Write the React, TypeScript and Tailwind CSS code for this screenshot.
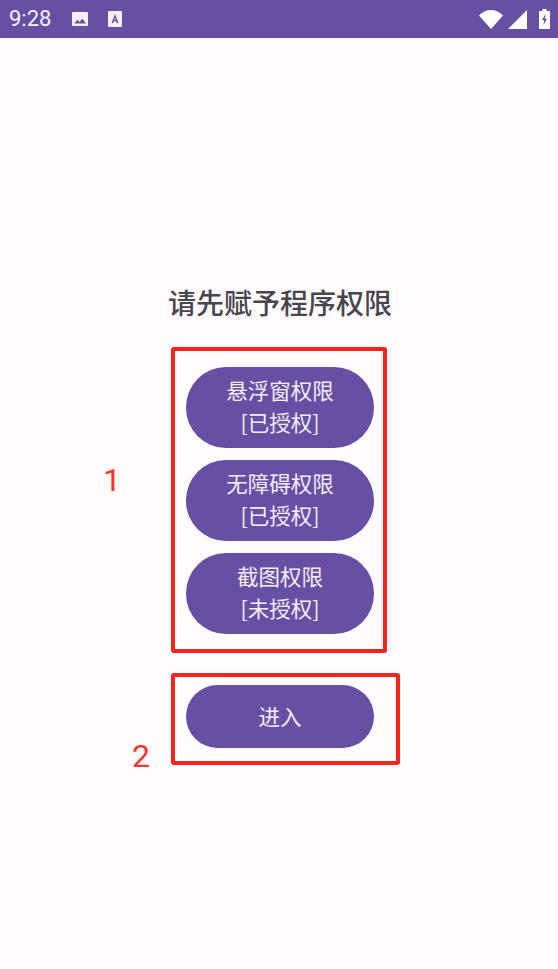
import React from "react";

const font = { fontFamily: '"Noto Sans CJK SC", "Noto Sans", sans-serif' };

function PermissionButton({ name, state }: { name: string; state: string }) {
  return (
    <button className="flex h-[81px] w-[188px] flex-col items-center justify-center rounded-[40px] bg-[#6750a4] pb-[4px] text-[21.5px] leading-[32px] text-[#f3edf7]">
      <span>{name}</span>
      <span>{state}</span>
    </button>
  );
}

export default function App() {
  return (
    <div className="relative h-[969px] w-[558px] overflow-hidden bg-[#fffbfe]" style={font}>
      <div className="flex h-[38px] items-center bg-[#6750a4] pl-[9px] pr-[8px] text-white">
        <span className="text-[22px] leading-none [font-family:Roboto,sans-serif] text-[#f4f0fa]">9:28</span>
        <svg className="ml-[20px]" width="18" height="18" viewBox="0 0 18 18" fill="#f4f0fa">
          <path fillRule="evenodd" d="M2 2h14a1 1 0 0 1 1 1v12a1 1 0 0 1-1 1H2a1 1 0 0 1-1-1V3a1 1 0 0 1 1-1Z M3 13.500h12l-3.600-5-2.900 3.600-2-2.400Z" />
        </svg>
        <svg className="ml-[18px]" width="16" height="18" viewBox="0 0 16 18" fill="#f4f0fa">
          <path fillRule="evenodd" d="M2 1h12a1 1 0 0 1 1 1v14a1 1 0 0 1-1 1H2a1 1 0 0 1-1-1V2a1 1 0 0 1 1-1Z M8 4 4.500 13h1.800l.6-1.700h2.200l.6 1.700h1.800L8 4Zm0 3.600.7 2.200H7.300Z" />
        </svg>
        <div className="ml-auto flex items-center gap-[5px]">
          <svg width="24" height="19" viewBox="0 0 24 19" fill="#ffffff">
            <path d="M0 5.500C3 2 7.500 0 12 0s9 2 12 5.500L12 19Z" />
          </svg>
          <svg width="19" height="19" viewBox="0 0 19 19" fill="#ffffff">
            <path d="M19 0v19H0Z" />
          </svg>
          <svg className="ml-[7px]" width="11" height="20" viewBox="0 0 11 20" fill="#ffffff">
            <path fillRule="evenodd" d="M3.500 0h4v2H10a1 1 0 0 1 1 1v16a1 1 0 0 1-1 1H1a1 1 0 0 1-1-1V3a1 1 0 0 1 1-1h2.500Z M6.500 5 3 11h2.200L4.500 16 8 9.800H5.800Z" />
          </svg>
        </div>
      </div>

      <main className="flex flex-col items-center pl-[2px] pt-[245px]">
        <h1 className="text-[28px] font-medium leading-[38px] text-[#49454f]">请先赋予程序权限</h1>
        <div className="mt-[46px] flex flex-col gap-[12px]">
          <PermissionButton name="悬浮窗权限" state="[已授权]" />
          <PermissionButton name="无障碍权限" state="[已授权]" />
          <PermissionButton name="截图权限" state="[未授权]" />
        </div>
        <button className="mt-[51px] h-[63px] w-[188px] rounded-[32px] bg-[#6750a4] text-[21.5px] text-[#f3edf7]">进入</button>
      </main>

      <div className="absolute left-[171px] top-[347px] h-[306px] w-[216px] rounded-[3px] border-[4px] border-[#f5241c]" />
      <div className="absolute left-[171px] top-[673px] h-[92px] w-[229px] rounded-[3px] border-[4px] border-[#f5241c]" />
      <span className="absolute left-[103px] top-[461px] text-[32px] leading-[38px] text-[#f5352c] [font-family:Roboto,sans-serif]">1</span>
      <span className="absolute left-[132px] top-[737px] text-[32px] leading-[38px] text-[#f5352c] [font-family:Roboto,sans-serif]">2</span>
    </div>
  );
}
